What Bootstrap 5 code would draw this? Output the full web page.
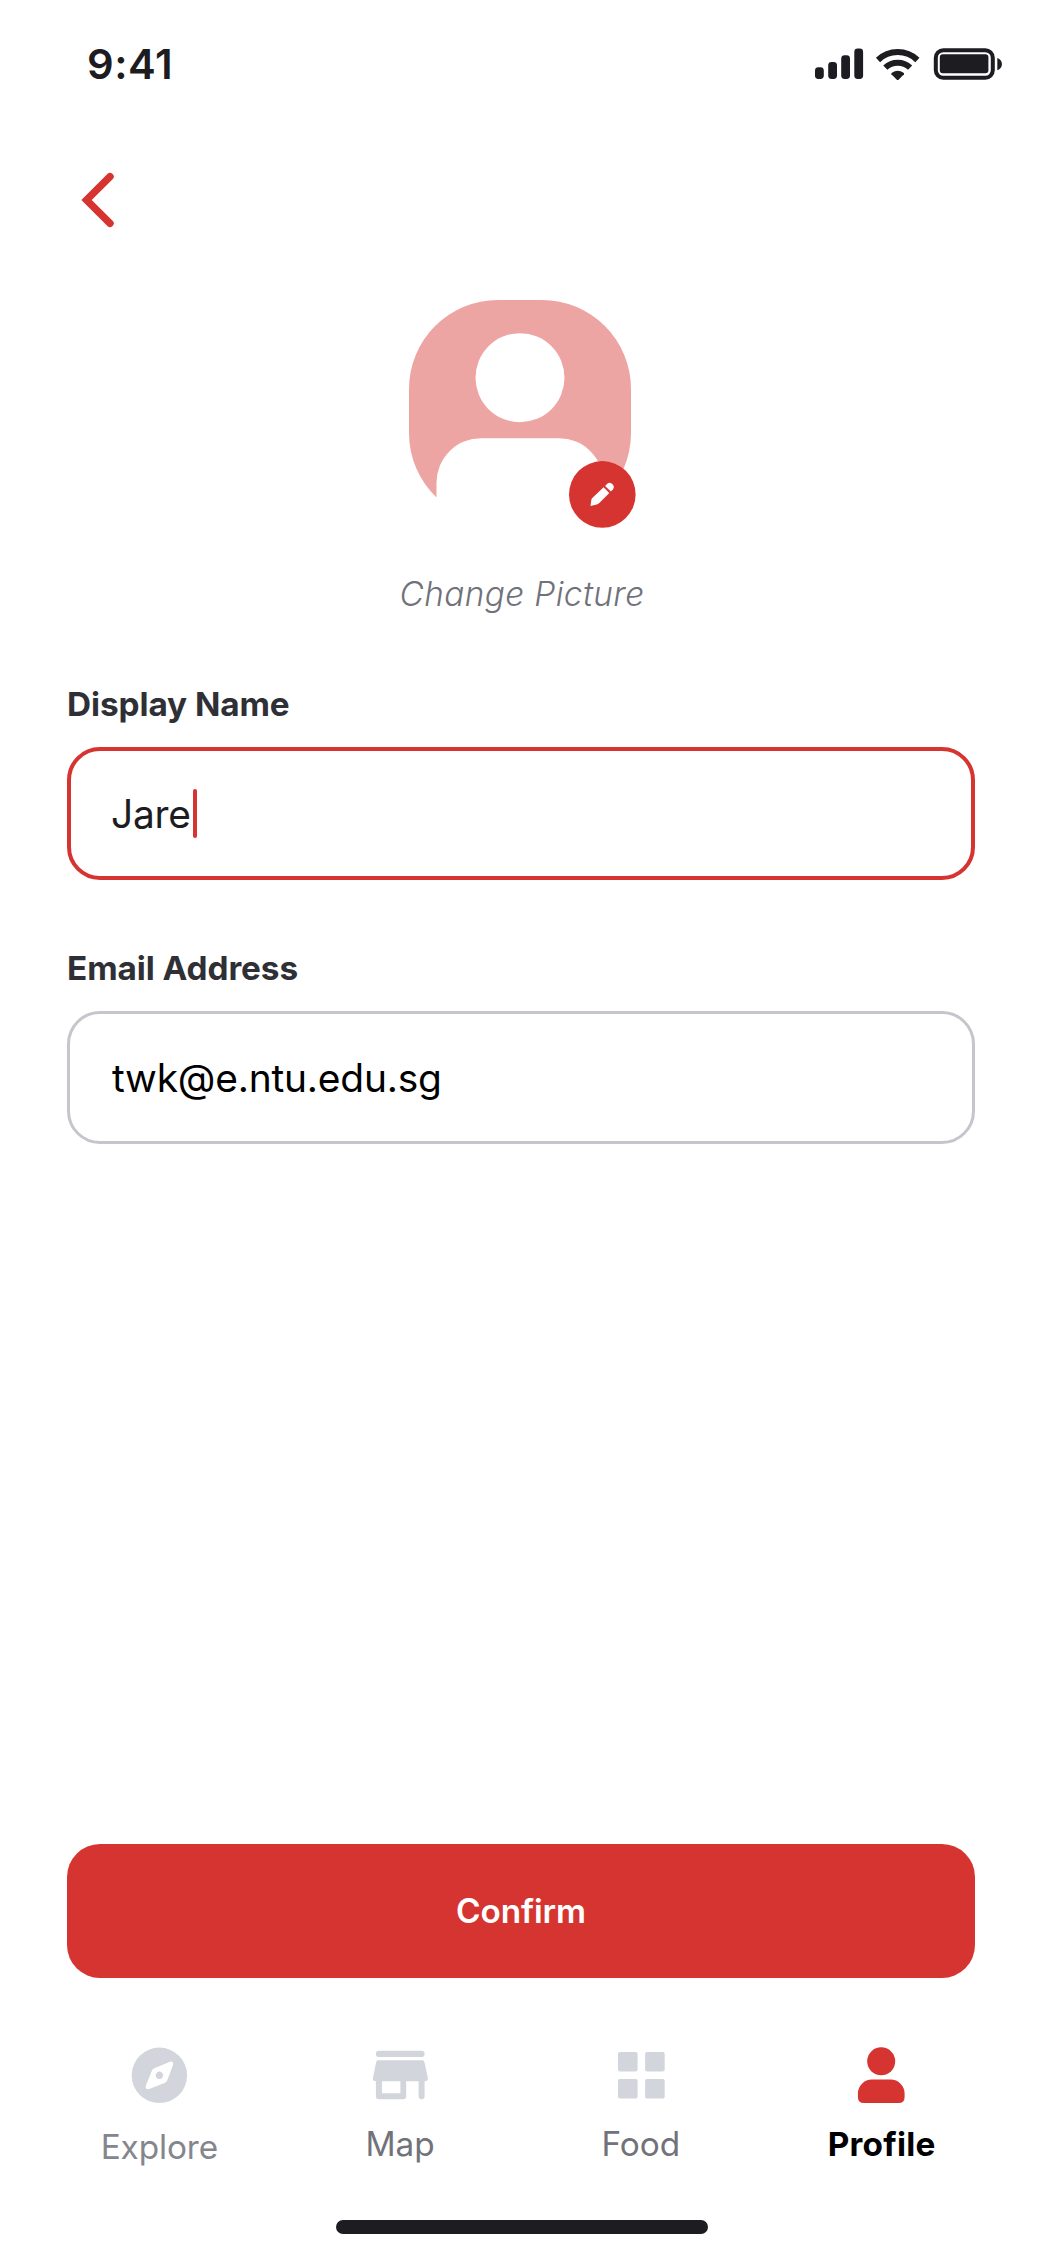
<!DOCTYPE html>
<html lang="en">
<head>
<meta charset="utf-8">
<meta name="viewport" content="width=device-width, initial-scale=1">
<title>Edit Profile</title>
<link href="https://cdn.jsdelivr.net/npm/bootstrap@5.3.0/dist/css/bootstrap.min.css" rel="stylesheet">
<style>
  :root { --brand: #d63430; --ink: #1c1c21; }
  body { font-family: Inter, "Liberation Sans", sans-serif; background: #fff; color: var(--ink); }
  svg { display: block; flex: none; }
  .screen { height: 2256px; width: 1042px; overflow: hidden; }
  .status { height: 126px; padding: 1px 38px 0 87px; }
  .clock { font-size: 41.7px; font-weight: 600; line-height: 50px; letter-spacing: .5px; }
  .back-row { height: 174px; padding: 46px 0 0 80px; }
  .avatar { width: 222px; height: 222px; margin-right: 2px; }
  .edit-badge { position: absolute; left: 160px; top: 161px; }
  .caption-text { font-size: 33.35px; font-weight: 300; font-style: italic; line-height: 40px; letter-spacing: .4px; margin: 51.5px 0 0 2px; color: #71717a; }
  .fields { padding: 70.8px 67px 0; }
  .field-label { font-size: 33.35px; font-weight: 700; line-height: 40px; letter-spacing: -.08px; margin-bottom: 22.7px; color: #2f3036; display: block; }
  .field-box, .field-box:focus { height: 133.4px; border: 3px solid #c5c6cc; border-radius: 33px; padding: 0 42px; font-size: 38.9px; line-height: 48px; letter-spacing: -.2px; color: #000; background: #fff; }
  .field-box.active { border: 4px solid var(--brand); padding: 0 40px; color: var(--ink); letter-spacing: -.3px; }
  .caret { width: 4px; height: 49px; border-radius: 2px; background: var(--brand); margin-left: 2px; }
  .second-field { margin-top: 68px; }
  .actions { padding: 0 67px; }
  .btn-confirm { height: 133.4px; border: 0; border-radius: 33px; background: var(--brand); color: #fff; font-size: 33.35px; font-weight: 600; line-height: 40px; letter-spacing: -.1px; }
  .btn-confirm:hover { background: var(--brand); color: #fff; }
  .tabs { padding: 64.3px 40px 0 39px; height: 241.8px; }
  .tab-item { color: #71727a; font-size: 33.35px; line-height: 40px; text-decoration: none; }
  .tab-item span { margin-top: 15.2px; }
  .tab-item.explore span { margin-top: 17.8px; color: #85868d; letter-spacing: -.1px; }
  .tab-item.current { color: #000; font-weight: 700; letter-spacing: .2px; }
  .home-bar { width: 372px; height: 14px; border-radius: 7px; background: var(--ink); margin: 0 334px 22.4px 336px; }
</style>
</head>
<body>
<main class="screen d-flex flex-column">
  <header class="status d-flex align-items-center justify-content-between">
    <div class="clock">9:41</div>
    <svg width="190" height="34" viewBox="814 47 190 34" fill="#1c1c21">
      <rect x="815" y="67.3" width="8.8" height="11.7" rx="3.4"/>
      <rect x="828.2" y="62" width="8.8" height="17" rx="3.4"/>
      <rect x="841.2" y="55.3" width="8.8" height="23.7" rx="3.4"/>
      <rect x="854.3" y="48.5" width="8.8" height="30.5" rx="3.4"/>
      <g fill="none" stroke="#1c1c21" stroke-width="6">
        <path d="M878 60a28.500 28.500 0 0 1 39.400 0"/>
        <path d="M885.300 67.600a18 18 0 0 1 24.800 0"/>
      </g>
      <path d="M891.400 74.200q-.3-.8.500-1.400q5.800-4.200 11.600 0q.8.600.5 1.400l-5.200 5.200q-1.100 1-2.200 0z"/>
      <rect x="935.800" y="50.200" width="57" height="27.600" rx="7.500" fill="none" stroke="#1c1c21" stroke-width="4"/>
      <rect x="939.800" y="54.300" width="48.600" height="19" rx="3"/>
      <path d="M997.300 58c6.200 2 6.200 10.200 0 12.200z"/>
    </svg>
  </header>

  <div class="back-row">
    <a href="#" aria-label="Back">
      <svg width="36" height="56" viewBox="80 172 36 56" fill="none" stroke="#d63430" stroke-width="7.400" stroke-linecap="round" stroke-linejoin="miter"><path d="M110 176.700L86.600 200L110 223.300"/></svg>
    </a>
  </div>

  <section class="d-flex flex-column align-items-center">
    <div class="avatar position-relative">
      <svg width="222" height="222" viewBox="0 0 222 222">
        <path fill="#eda5a3" d="M88.900 0H133.100A88.900 88.900 0 0 1 222 88.900V133.100A88.900 88.900 0 0 1 194.500 197.500V182.500A44.500 44.500 0 0 0 150 138.200H72A44.500 44.500 0 0 0 27.500 182.500V197.500A88.900 88.900 0 0 1 0 133.100V88.900A88.900 88.900 0 0 1 88.900 0Z"/>
        <circle cx="111" cy="77.700" r="44.500" fill="#fff"/>
      </svg>
      <svg class="edit-badge" width="67" height="67" viewBox="569 461 67 67">
        <circle cx="602.300" cy="494.400" r="33.300" fill="#d63430"/>
        <g fill="#fff"><path d="M603.600 487.300L609.300 493L599 503.300Q598 504.200 596.700 504.500L590.500 506L591.400 499.600Q591.600 498.800 592.300 498.100Z"/>
        <path d="M605.100 485.900L607.300 483.700Q609.200 482 611.300 483.300L613.200 485.100Q614.900 487.300 613.100 489.200L610.900 491.400Z"/></g>
      </svg>
    </div>
    <div class="caption-text">Change Picture</div>
  </section>

  <form class="fields">
    <label class="field-label">Display Name</label>
    <div class="form-control field-box active d-flex align-items-center"><span>Jare</span><i class="caret"></i></div>
    <label class="field-label second-field" for="email">Email Address</label>
    <input id="email" type="text" class="form-control field-box" value="twk@e.ntu.edu.sg">
  </form>

  <div class="actions mt-auto">
    <button type="button" class="btn btn-confirm w-100">Confirm</button>
  </div>

  <nav class="tabs d-flex align-items-start">
    <a href="#" class="tab-item explore col-3 d-flex flex-column align-items-center">
      <svg width="66.700" height="66.700" viewBox="126 2041.700 66.700 66.700"><circle cx="159.400" cy="2075" r="27.700" fill="#d3d5dd"/>
        <path fill="#fff" fill-rule="evenodd" d="M153.700 2068.300L170 2061.400Q173.900 2060.600 173 2064.700L167.300 2080Q166.600 2081.700 165 2082.400L149.200 2088.700Q144.900 2089.500 145.900 2085.200L152.100 2069.900Q152.600 2068.800 153.700 2068.300ZM159.400 2071.300a3.700 3.700 0 1 0 .01 0Z"/></svg>
      <span>Explore</span>
    </a>
    <a href="#" class="tab-item col-3 d-flex flex-column align-items-center">
      <svg width="66.700" height="66.700" viewBox="367.100 2041.700 66.700 66.700" fill="#d3d5dd">
        <rect x="376" y="2050.500" width="48.700" height="6.300" rx="3.100"/>
        <path fill-rule="evenodd" d="M378.300 2060H422.300Q424.200 2060 424.600 2061.900L428 2077.800Q428.300 2081 424.700 2081V2096Q424.700 2099 421.700 2099Q418.700 2099 418.700 2096V2081H406.300V2096Q406.300 2099 403.300 2099H379Q376 2099 376 2096V2081Q372.500 2081 373 2077.800L376.200 2061.900Q376.600 2060 378.300 2060ZM382 2081V2093H400.500V2081Z"/></svg>
      <span>Map</span>
    </a>
    <a href="#" class="tab-item col-3 d-flex flex-column align-items-center">
      <svg width="66.700" height="66.700" viewBox="608 2041.700 66.700 66.700" fill="#d3d5dd">
        <rect x="618" y="2051.700" width="19.600" height="19.400" rx="1.800"/><rect x="645.100" y="2051.700" width="19.600" height="19.400" rx="1.800"/>
        <rect x="618" y="2078.800" width="19.600" height="19.400" rx="1.800"/><rect x="645.100" y="2078.800" width="19.600" height="19.400" rx="1.800"/></svg>
      <span>Food</span>
    </a>
    <a href="#" class="tab-item current col-3 d-flex flex-column align-items-center" aria-current="page">
      <svg width="66.700" height="66.700" viewBox="849.100 2041.700 66.700 66.700" fill="#d63430"><circle cx="882.300" cy="2061" r="14"/>
        <path d="M873 2079.300H891.800A13.900 13.900 0 0 1 905.700 2093.200V2096.600Q905.700 2102.600 899.700 2102.600H865Q859 2102.600 859 2096.600V2093.200A13.900 13.900 0 0 1 873 2079.300Z"/></svg>
      <span>Profile</span>
    </a>
  </nav>
  <div class="home-bar flex-shrink-0"></div>
</main>
<script src="https://cdn.jsdelivr.net/npm/bootstrap@5.3.0/dist/js/bootstrap.bundle.min.js"></script>
</body>
</html>
